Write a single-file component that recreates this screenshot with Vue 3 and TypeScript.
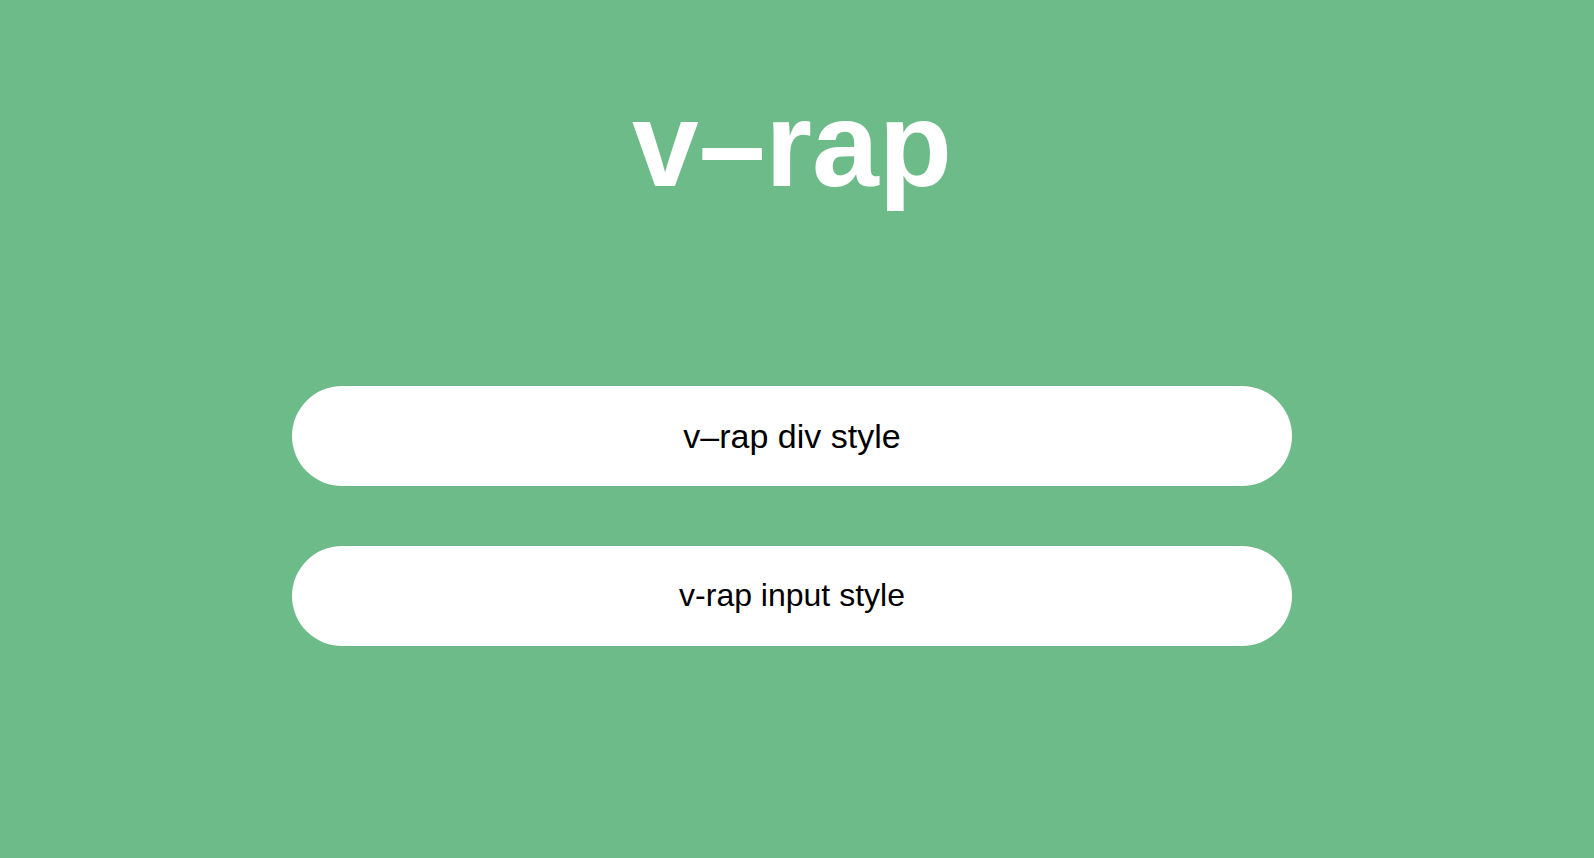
<script setup lang="ts">
import { ref } from 'vue'

const title = 'v–rap'
const divText = 'v–rap div style'
const inputText = ref('v-rap input style')
</script>

<template>
  <main class="page">
    <h1 class="title">{{ title }}</h1>
    <div class="fields">
      <div class="pill pill-div">{{ divText }}</div>
      <input v-model="inputText" class="pill pill-input" type="text" aria-label="v-rap input" />
    </div>
  </main>
</template>

<style>
body {
  background: #6dbb88;
}
</style>

<style scoped>
.page {
  box-sizing: border-box;
  min-height: 100vh;
  padding: 72px 10px 72px 0;
  display: flex;
  flex-direction: column;
  align-items: center;
  background: #6dbb88;
  font-family: "Liberation Sans", Arial, sans-serif;
}

.title {
  margin: 0;
  font-size: 120px;
  line-height: 144px;
  font-weight: 700;
  color: #fff;
}

.fields {
  width: 100%;
  max-width: 1000px;
  margin-top: 170px;
  display: flex;
  flex-direction: column;
  gap: 60px;
}

.pill {
  box-sizing: border-box;
  width: 100%;
  height: 100px;
  padding: 0 48px;
  border: 0;
  border-radius: 50px;
  outline: 0;
  background: #fff;
  color: #000;
  text-align: center;
}

.pill-div {
  font-size: 34px;
  line-height: 100px;
}

.pill-input {
  padding-bottom: 2px;
  font-family: inherit;
  font-size: 32px;
}
</style>
